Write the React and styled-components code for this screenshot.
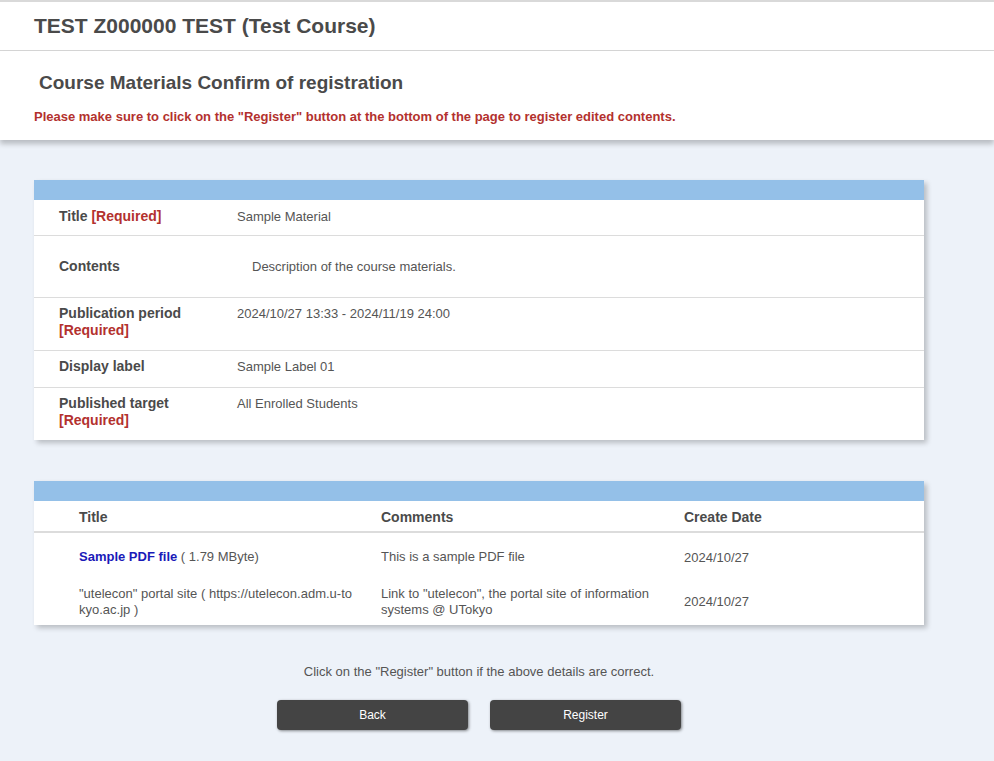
import styled, { createGlobalStyle } from 'styled-components'

const GlobalStyle = createGlobalStyle`
  html, body {
    margin: 0;
    padding: 0;
    background: #edf2f9;
    font-family: "Liberation Sans", Arial, sans-serif;
    color: #444;
  }
`

const Page = styled.div`
  min-height: 761px;
  border-top: 2px solid #d9d9d9;
`

const CourseBar = styled.header`
  background: #fff;
  height: 48px;
  border-bottom: 1px solid #d6d6d6;
  display: flex;
  align-items: center;
  padding-left: 34px;
`

const CourseTitle = styled.h1`
  margin: 0;
  font-size: 21px;
  font-weight: bold;
  color: #4a4a4a;
`

const PageHead = styled.section`
  background: #fff;
  padding: 21px 34px 15px;
  box-shadow: 0 4px 5px rgba(0, 0, 0, 0.22);
  position: relative;
`

const PageTitle = styled.h2`
  margin: 0 0 0 5px;
  font-size: 19px;
  font-weight: bold;
  color: #4a4a4a;
  line-height: 22px;
`

const Warning = styled.p`
  margin: 15px 0 0;
  font-size: 13px;
  font-weight: bold;
  color: #b3312e;
  line-height: 16px;
`

const Main = styled.main`
  padding: 40px 70px 30px 34px;
  width: 890px;
`

const Card = styled.div`
  background: #fff;
  box-shadow: 3px 3px 5px rgba(0, 0, 0, 0.22);
  margin-bottom: ${(p) => p.$gap || 0}px;
`

const CardBar = styled.div`
  height: 20px;
  background: #94c0e8;
`

const Row = styled.div`
  display: grid;
  grid-template-columns: 178px 1fr;
  padding: ${(p) => p.$pad || '7px 25px 0'};
  border-top: ${(p) => (p.$first ? 'none' : '1px solid #dcdcdc')};
  height: ${(p) => p.$h}px;
  box-sizing: border-box;
  align-items: ${(p) => (p.$center ? 'center' : 'start')};
`

const Label = styled.div`
  font-size: 14px;
  font-weight: bold;
  color: #4a4a4a;
  line-height: 17px;
`

const Req = styled.span`
  color: #b3312e;
`

const Value = styled.div`
  font-size: 13px;
  color: #555;
  line-height: 17px;
  padding-left: ${(p) => p.$indent || 0}px;
`

const Grid = styled.div`
  display: grid;
  grid-template-columns: 302px 303px 1fr;
  padding: ${(p) => p.$pad};
  padding-left: 45px;
  border-bottom: ${(p) => (p.$head ? '2px solid #dcdcdc' : 'none')};
  align-items: center;
`

const Th = styled.div`
  font-size: 14px;
  font-weight: bold;
  color: #4a4a4a;
  line-height: 17px;
`

const Td = styled.div`
  font-size: 13px;
  color: #555;
  line-height: 16px;
  padding-right: 25px;
  word-break: ${(p) => (p.$breakAll ? 'break-all' : 'normal')};
  padding-top: ${(p) => p.$top || 0}px;
`

const FileLink = styled.a`
  color: #1a1ab8;
  font-weight: bold;
  text-decoration: none;
`

const Note = styled.p`
  margin: 0 0 21px;
  text-align: center;
  font-size: 13px;
  color: #555;
`

const Actions = styled.div`
  display: flex;
  justify-content: center;
  gap: 22px;
`

const Button = styled.button`
  width: 191px;
  height: 30px;
  background: #444;
  color: #fff;
  border: none;
  border-radius: 4px;
  font-family: "Liberation Sans", Arial, sans-serif;
  font-size: 12px;
  box-shadow: 1px 1px 3px rgba(0, 0, 0, 0.45);
  cursor: pointer;
`

export default function App() {
  return (
    <Page>
      <GlobalStyle />
      <CourseBar>
        <CourseTitle>TEST Z000000 TEST (Test Course)</CourseTitle>
      </CourseBar>
      <PageHead>
        <PageTitle>Course Materials Confirm of registration</PageTitle>
        <Warning>
          Please make sure to click on the "Register" button at the bottom of the page to register edited contents.
        </Warning>
      </PageHead>
      <Main>
        <Card $gap={41}>
          <CardBar />
          <Row $first $h={35} $pad="8px 25px 0">
            <Label>
              Title <Req>[Required]</Req>
            </Label>
            <Value>Sample Material</Value>
          </Row>
          <Row $h={62} $center $pad="0 25px">
            <Label>Contents</Label>
            <Value $indent={15}>Description of the course materials.</Value>
          </Row>
          <Row $h={53}>
            <Label>
              Publication period
              <br />
              <Req>[Required]</Req>
            </Label>
            <Value>2024/10/27 13:33 - 2024/11/19 24:00</Value>
          </Row>
          <Row $h={37}>
            <Label>Display label</Label>
            <Value>Sample Label 01</Value>
          </Row>
          <Row $h={53}>
            <Label>
              Published target
              <br />
              <Req>[Required]</Req>
            </Label>
            <Value>All Enrolled Students</Value>
          </Row>
        </Card>

        <Card $gap={39}>
          <CardBar />
          <Grid $head $pad="8px 0 5px">
            <Th>Title</Th>
            <Th>Comments</Th>
            <Th>Create Date</Th>
          </Grid>
          <Grid $pad="15px 0 0">
            <Td>
              <FileLink href="#">Sample PDF file</FileLink> ( 1.79 MByte)
            </Td>
            <Td>This is a sample PDF file</Td>
            <Td $top={2}>2024/10/27</Td>
          </Grid>
          <Grid $pad="20px 0 7px">
            <Td $breakAll>"utelecon" portal site ( https://utelecon.adm.u-tokyo.ac.jp )</Td>
            <Td>Link to "utelecon", the portal site of information systems @ UTokyo</Td>
            <Td>2024/10/27</Td>
          </Grid>
        </Card>

        <Note>Click on the "Register" button if the above details are correct.</Note>
        <Actions>
          <Button>Back</Button>
          <Button>Register</Button>
        </Actions>
      </Main>
    </Page>
  )
}
